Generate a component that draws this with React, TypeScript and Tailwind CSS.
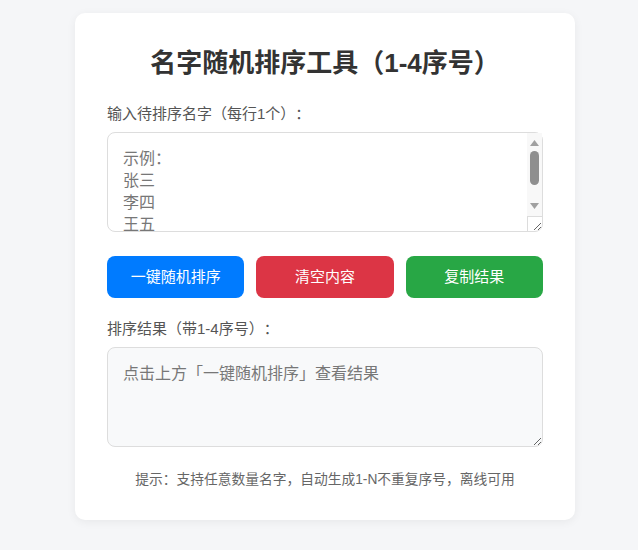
import { useState } from "react";

const font = { fontFamily: '"Liberation Sans", "Noto Sans CJK SC", sans-serif' };

// stands in for the classic scrollbar the textarea shows when the example overflows
function FakeScrollbar() {
  return (
    <div className="pointer-events-none absolute top-px right-px flex h-[98px] w-[15px] flex-col">
      <div className="flex h-[83px] flex-col items-center bg-[#f8f8f8]">
        <svg width="9" height="6" viewBox="0 0 9 6" className="mt-[7px]">
          <path d="M4.5 0 L9 6 L0 6 Z" fill="#a0a0a0" />
        </svg>
        <div className="mt-[5px] h-[34px] w-[9px] rounded-full bg-[#8f8f8f]" />
        <svg width="9" height="6" viewBox="0 0 9 6" className="mt-auto mb-[7px]">
          <path d="M0 0 L9 0 L4.5 6 Z" fill="#a0a0a0" />
        </svg>
      </div>
      <div className="h-[15px] border-t border-l border-[#dcdcdc]" />
    </div>
  );
}

export default function App() {
  const [input, setInput] = useState("");
  const [result, setResult] = useState("");

  function shuffle() {
    const names = input
      .split("\n")
      .map((n) => n.trim())
      .filter(Boolean);
    for (let i = names.length - 1; i > 0; i--) {
      const j = Math.floor(Math.random() * (i + 1));
      [names[i], names[j]] = [names[j], names[i]];
    }
    setResult(names.map((n, i) => `${i + 1}. ${n}`).join("\n"));
  }

  return (
    <div
      className="min-h-[550px] bg-[#f5f6f8] pt-[13px] pl-[75px] [text-spacing-trim:space-all]"
      style={font}
    >
      <div className="w-[500px] rounded-[10px] bg-white px-8 pt-[32px] pb-[30px] shadow-[0_2px_10px_rgba(0,0,0,0.06)]">
        <h1 className="text-center text-[26px] leading-[36px] font-bold text-[#333]">
          名字随机排序工具（1-4序号）
        </h1>

        <label className="mt-[22px] block text-[15px] leading-[21px] text-[#555]">
          输入待排序名字（每行1个）：
        </label>
        <div className="relative mt-2">
          <textarea
            value={input}
            onChange={(e) => setInput(e.target.value)}
            placeholder={"示例：\n张三\n李四\n王五\n赵六\n钱七"}
            className="block h-[100px] w-full rounded-lg border border-[#ddd] py-[15px] pr-[20px] pl-[15px] text-[16px] leading-[22px] text-[#333] outline-none placeholder:text-[#777]"
          />
          {!input && <FakeScrollbar />}
        </div>

        <div className="mt-6 flex gap-3">
          <button
            onClick={shuffle}
            className="h-[42px] flex-1 rounded-lg bg-[#007bff] text-[15px] text-white"
          >
            一键随机排序
          </button>
          <button
            onClick={() => {
              setInput("");
              setResult("");
            }}
            className="h-[42px] flex-1 rounded-lg bg-[#dc3545] text-[15px] text-white"
          >
            清空内容
          </button>
          <button
            onClick={() => navigator.clipboard?.writeText(result)}
            className="h-[42px] flex-1 rounded-lg bg-[#28a745] text-[15px] text-white"
          >
            复制结果
          </button>
        </div>

        <label className="mt-5 block text-[15px] leading-[21px] text-[#555]">
          排序结果（带1-4序号）：
        </label>
        <textarea
          readOnly
          value={result}
          placeholder="点击上方「一键随机排序」查看结果"
          className="mt-2 block h-[100px] w-full rounded-lg border border-[#ddd] bg-[#f8f9fa] px-[15px] py-[15px] text-[16px] leading-[22px] text-[#333] outline-none placeholder:text-[#777]"
        />

        <p className="mt-[23px] text-center text-[13.75px] leading-[20px] text-[#666]">
          提示：支持任意数量名字，自动生成1-N不重复序号，离线可用
        </p>
      </div>
    </div>
  );
}
